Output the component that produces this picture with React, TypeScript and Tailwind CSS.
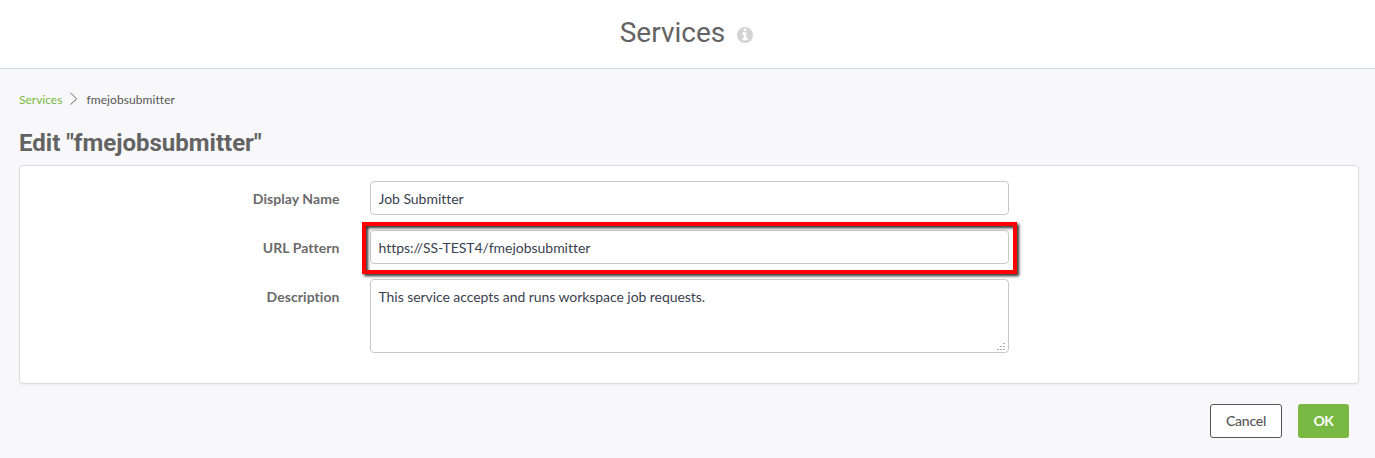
import type { ReactNode } from 'react';

const inputClass =
  "block h-[34px] w-full rounded-[4px] border border-[#c8c8c8] bg-white px-[7.5px] text-[14px] tracking-[-0.03px] text-[#3a3f51] outline-none";

function InfoIcon() {
  return (
    <svg width="16" height="16" viewBox="0 128 1536 1536" fill="currentColor" className="mt-[14px] ml-3 text-[#d3d3d3]">
      <path d="M1024 1376v-160q0-14-9-23t-23-9h-96v-512q0-14-9-23t-23-9h-320q-14 0-23 9t-9 23v160q0 14 9 23t23 9h96v320h-96q-14 0-23 9t-9 23v160q0 14 9 23t23 9h448q14 0 23-9t9-23zm-128-896v-160q0-14-9-23t-23-9h-192q-14 0-23 9t-9 23v160q0 14 9 23t23 9h192q14 0 23-9t9-23zm640 416q0 209-103 385.5t-279.5 279.5-385.5 103-385.5-103-279.5-279.5-103-385.5 103-385.5 279.5-279.5 385.5-103 385.5 103 279.5 279.5 103 385.5z" />
    </svg>
  );
}

function Row({ label, id, children }: { label: string; id: string; children: ReactNode }) {
  return (
    <div className="flex">
      <label htmlFor={id} className="w-[319.5px] shrink-0 pt-[8px] text-right text-[14px] leading-[20px] font-bold tracking-[0.06px] text-[#6a6a6a]">
        {label}
      </label>
      <div className="relative ml-[30.5px] w-[639px]">{children}</div>
    </div>
  );
}

export default function App() {
  return (
    <div className="h-[458px] overflow-hidden bg-[#f8f8fa] font-['Lato',sans-serif] text-[#666] [font-variant-ligatures:none]">
      <header className="flex h-[69px] items-start justify-center border-b border-[#c9d9e3] bg-white pt-[13px] pr-[2px]">
        <h1 className="font-['Roboto',sans-serif] text-[28px] leading-[40px] text-[#636363]">Services</h1>
        <InfoIcon />
      </header>

      <main className="pr-4 pl-[19px]">
        <nav className="mt-[23px] flex h-4 items-center text-[12px] leading-4">
          <a className="text-[#78b843]">Services</a>
          <svg width="8" height="14" viewBox="0 0 8 14" className="mr-2 ml-2 -translate-y-px" fill="none" stroke="#666">
            <path d="M.5 1l6.2 5.8L.5 12.6" />
          </svg>
          <span className="tracking-[0.08px] text-[#555]">fmejobsubmitter</span>
        </nav>

        <h2 className="mt-[19px] font-['Roboto',sans-serif] text-[24px] leading-[32px] font-bold text-[#636363]">
          Edit "fmejobsubmitter"
        </h2>

        <section className="mt-[6px] flex h-[219px] flex-col gap-[15px] rounded-[4px] border border-[#dcdcdc] bg-white pt-[15px] shadow-[0_1px_2px_rgba(0,0,0,0.06)]">
          <Row label="Display Name" id="name">
            <input id="name" className={inputClass} defaultValue="Job Submitter" />
          </Row>
          <Row label="URL Pattern" id="url">
            <input id="url" className={inputClass} defaultValue="https://SS-TEST4/fmejobsubmitter" />
            <div className="pointer-events-none absolute -top-[8px] -left-[8px] h-[52px] w-[655px] border-4 border-[#fe0000] [filter:drop-shadow(2px_2px_1.5px_rgba(0,0,0,0.85))]" />
          </Row>
          <Row label="Description" id="description">
            <textarea
              id="description"
              className="block h-[74px] w-full resize-none rounded-[4px] border border-[#c8c8c8] bg-white px-[7.5px] py-[7px] text-[14px] leading-[20px] tracking-[-0.06px] text-[#3a3f51] outline-none"
              defaultValue="This service accepts and runs workspace job requests."
            />
            <svg width="9" height="9" viewBox="0 0 9 9" fill="#aaa" shapeRendering="crispEdges" className="absolute right-[3px] bottom-px">
              <path d="M6 0h2v1H6zM3 3h2v1H3zM6 3h2v1H6zM0 6h2v1H0zM3 6h2v1H3zM6 6h2v1H6z" />
            </svg>
          </Row>
        </section>

        <div className="mt-5 mr-[10px] flex justify-end gap-4 text-[14px] leading-5">
          <button className="h-[34px] w-[72px] rounded-[3px] border border-[#555] bg-white font-medium tracking-[-0.25px] text-[#555]">Cancel</button>
          <button className="h-[34px] w-[51px] rounded-[3px] bg-[#78b843] font-bold tracking-[-0.4px] text-white">OK</button>
        </div>
      </main>
    </div>
  );
}
